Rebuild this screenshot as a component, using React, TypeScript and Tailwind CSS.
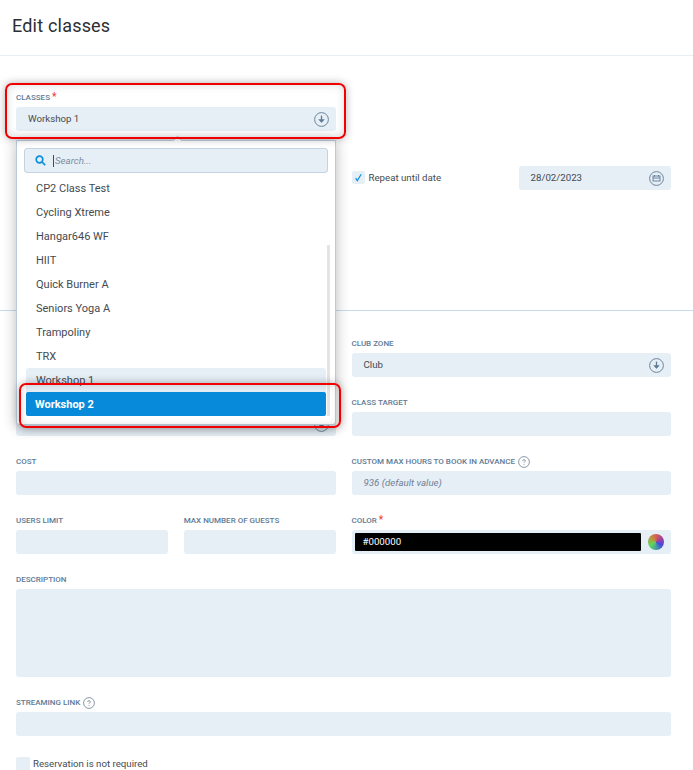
import React from 'react';

const options = ['CP2 Class Test', 'Cycling Xtreme', 'Hangar646 WF', 'HIIT', 'Quick Burner A', 'Seniors Yoga A', 'Trampoliny', 'TRX'];

const ArrowIcon = () => (
    <svg width="15" height="15" viewBox="0 0 15 15" fill="none" stroke="#5f7a94" className="flex-none">
        <circle cx="7.5" cy="7.5" r="6.9" strokeWidth="0.9" />
        <path d="M7.5 3.6v6.4" strokeWidth="1.3" />
        <path d="M4.7 7.6l2.8 3 2.8-3z" fill="#5f7a94" strokeWidth="0.5" />
    </svg>
);

const CalendarIcon = () => (
    <svg width="15" height="15" viewBox="0 0 15 15" fill="none" stroke="#5f7a94" className="flex-none">
        <circle cx="7.5" cy="7.5" r="6.9" strokeWidth="0.9" />
        <rect x="4" y="5" width="7" height="5" strokeWidth="0.9" />
        <path d="M4 7h7M5.5 4v1.5M9.5 4v1.5" strokeWidth="0.9" />
    </svg>
);

const HelpIcon = () => (
    <svg width="12" height="12" viewBox="0 0 12 12" fill="none" className="flex-none">
        <circle cx="6" cy="6" r="5.4" stroke="#6f7f8e" strokeWidth="0.8" />
        <path d="M4.6 4.9c0-.8.6-1.2 1.4-1.2s1.4.4 1.4 1.1c0 .9-1.4 1-1.4 1.9" stroke="#6f7f8e" strokeWidth="0.8" />
        <circle cx="6" cy="8.3" r="0.5" fill="#6f7f8e" />
    </svg>
);

const Label: React.FC<{ text: string; required?: boolean; help?: boolean }> = ({ text, required, help }) => (
    <div className="h-[14px] mb-[3px] pt-[1px] flex items-center gap-[3px] text-[8px] font-medium uppercase text-[#5f7a94] whitespace-nowrap">
        <span>{text}</span>
        {required && <span className="text-[#ef4444] text-[10px] leading-none -ml-[1px] -mt-[2px]">*</span>}
        {help && <HelpIcon />}
    </div>
);

const Input: React.FC<{ children?: React.ReactNode; className?: string }> = ({ children, className = 'h-6' }) => (
    <div className={`${className} rounded-[3px] bg-[#e6eef6] flex items-center justify-between pl-[12px] pr-[7px] text-[9.7px] text-[#444b52]`}>
        {children}
    </div>
);

const Field: React.FC<{ label: string; required?: boolean; help?: boolean; children?: React.ReactNode; inputClass?: string }> = ({ label, required, help, children, inputClass }) => (
    <div>
        <Label text={label} required={required} help={help} />
        <Input className={inputClass}>{children}</Input>
    </div>
);

export default function App() {
    return (
        <div className="relative h-[770px] w-[693px] overflow-hidden bg-white font-['Roboto',sans-serif]">
            <div className="h-[56px] border-b border-[#e6eef6] pl-3 flex items-center pb-[5px]">
                <h1 className="text-[18px] text-[#2b2f33] tracking-[0.2px]">Edit classes</h1>
            </div>

            {/* Top section */}
            <div className="h-[255px] border-b border-[#c9dbea] pt-[34px] pl-4 pr-[22px]">
                <div className="grid grid-cols-2 gap-4">
                    <Field label="Classes" required>
                        <span>Workshop 1</span>
                        <ArrowIcon />
                    </Field>
                </div>
                <div className="grid grid-cols-2 gap-4 mt-[35px]">
                    <div />
                    <div className="grid grid-cols-[167px_1fr] items-center">
                        <label className="flex items-center gap-[4px] text-[9.7px] text-[#444b52]">
                            <span className="w-[13px] h-[13px] rounded-[2px] bg-[#e6eef6] flex items-center justify-center">
                                <svg width="9" height="9" viewBox="0 0 9 9" fill="none">
                                    <path d="M1.6 5.2l1.7 2.4L7.2 1.2" stroke="#0a8fdc" strokeWidth="1.2" />
                                </svg>
                            </span>
                            Repeat until date
                        </label>
                        <Input>
                            <span>28/02/2023</span>
                            <CalendarIcon />
                        </Input>
                    </div>
                </div>
            </div>

            {/* Main fields */}
            <div className="pt-[25px] pl-4 pr-[22px] flex flex-col gap-[18px]">
                <div className="grid grid-cols-2 gap-4">
                    <Field label="Trainer"><ArrowIcon /></Field>
                    <Field label="Club zone">
                        <span>Club</span>
                        <ArrowIcon />
                    </Field>
                </div>
                <div className="grid grid-cols-2 gap-4">
                    <Field label="Category">
                        <span />
                        <ArrowIcon />
                    </Field>
                    <Field label="Class target" />
                </div>
                <div className="grid grid-cols-2 gap-4">
                    <Field label="Cost" />
                    <Field label="Custom max hours to book in advance" help>
                        <span className="italic text-[#6f8193]">936 (default value)</span>
                    </Field>
                </div>
                <div className="grid grid-cols-2 gap-4">
                    <div className="grid grid-cols-2 gap-4">
                        <Field label="Users limit" />
                        <Field label="Max number of guests" />
                    </div>
                    <div>
                        <Label text="Color" required />
                        <div className="h-6 rounded-[3px] bg-[#e6eef6] flex items-center justify-between pl-[3px] pr-[7px]">
                            <div className="h-[18px] w-[286px] rounded-[1px] bg-black text-white text-[9.7px] flex items-center pl-2">#000000</div>
                            <div className="w-4 h-4 rounded-full bg-[conic-gradient(#d9604f,#a040a0,#4848e0,#46a0a0,#5ed85c,#b0a040,#d9604f)]" />
                        </div>
                    </div>
                </div>
                <Field label="Description" inputClass="h-[88px]" />
                <Field label="Streaming link" help />
                <label className="flex items-center gap-[3px] text-[9.7px] text-[#444b52] mt-[3px]">
                    <span className="w-[14px] h-[14px] rounded-[2px] bg-[#e6eef6]" />
                    Reservation is not required
                </label>
            </div>

            {/* Dropdown */}
            <div className="absolute left-4 top-[140px] w-[320px] h-[285px] bg-white border border-[#bccbda] rounded-b-[3px] shadow-[0_2px_14px_rgba(0,0,0,0.28)] pt-[7px] pl-[7px]">
                <div className="absolute -top-[4px] left-[157px] w-[7px] h-[7px] rotate-45 bg-white border-l border-t border-[#bccbda]" />
                <div className="w-[304px] h-[25px] rounded-[3px] bg-[#e6eef6] border border-[#c3d3e2] flex items-center pl-[10px] gap-[7px] text-[9.7px] italic text-[#7b8d9e]">
                    <svg width="11" height="11" viewBox="0 0 11 11" fill="none" stroke="#0a8fdc" strokeWidth="1.7" className="flex-none">
                        <circle cx="4.5" cy="4.5" r="3.3" />
                        <path d="M7 7l3.2 3.2" />
                    </svg>
                    <span className="border-l border-[#444b52] pl-[1px] leading-[12px]">Search...</span>
                </div>
                <div className="mt-[3px] ml-[2px] w-[300px]">
                    {options.map((name) => (
                        <div key={name} className="h-6 flex items-center pl-[10px] pt-[2px] text-[11px] text-[#444b52]">{name}</div>
                    ))}
                    <div className="h-6 flex items-center pl-[10px] pt-[2px] rounded-t-[3px] bg-[#e6eef6] text-[11px] text-[#444b52]">Workshop 1</div>
                    <div className="h-6 flex items-center pl-[9px] pt-[2px] rounded-[2px] bg-[#068ad9] text-[11px] font-bold text-white">Workshop 2</div>
                </div>
                <div className="absolute right-[5px] top-[104px] w-[3px] h-[171px] bg-[#e4e4e4]" />
            </div>

            {/* Red highlights */}
            <div className="absolute left-[5px] top-[83px] w-[341px] h-[56px] rounded-[7px] border-2 border-[#f00000] shadow-[0_0_8px_rgba(0,0,0,0.3),inset_0_0_8px_rgba(0,0,0,0.15)]" />
            <div className="absolute left-[19px] top-[383px] w-[322px] h-[45px] rounded-[7px] border-2 border-[#f00000] shadow-[0_0_8px_rgba(0,0,0,0.3),inset_0_0_8px_rgba(0,0,0,0.15)]" />
        </div>
    );
}
